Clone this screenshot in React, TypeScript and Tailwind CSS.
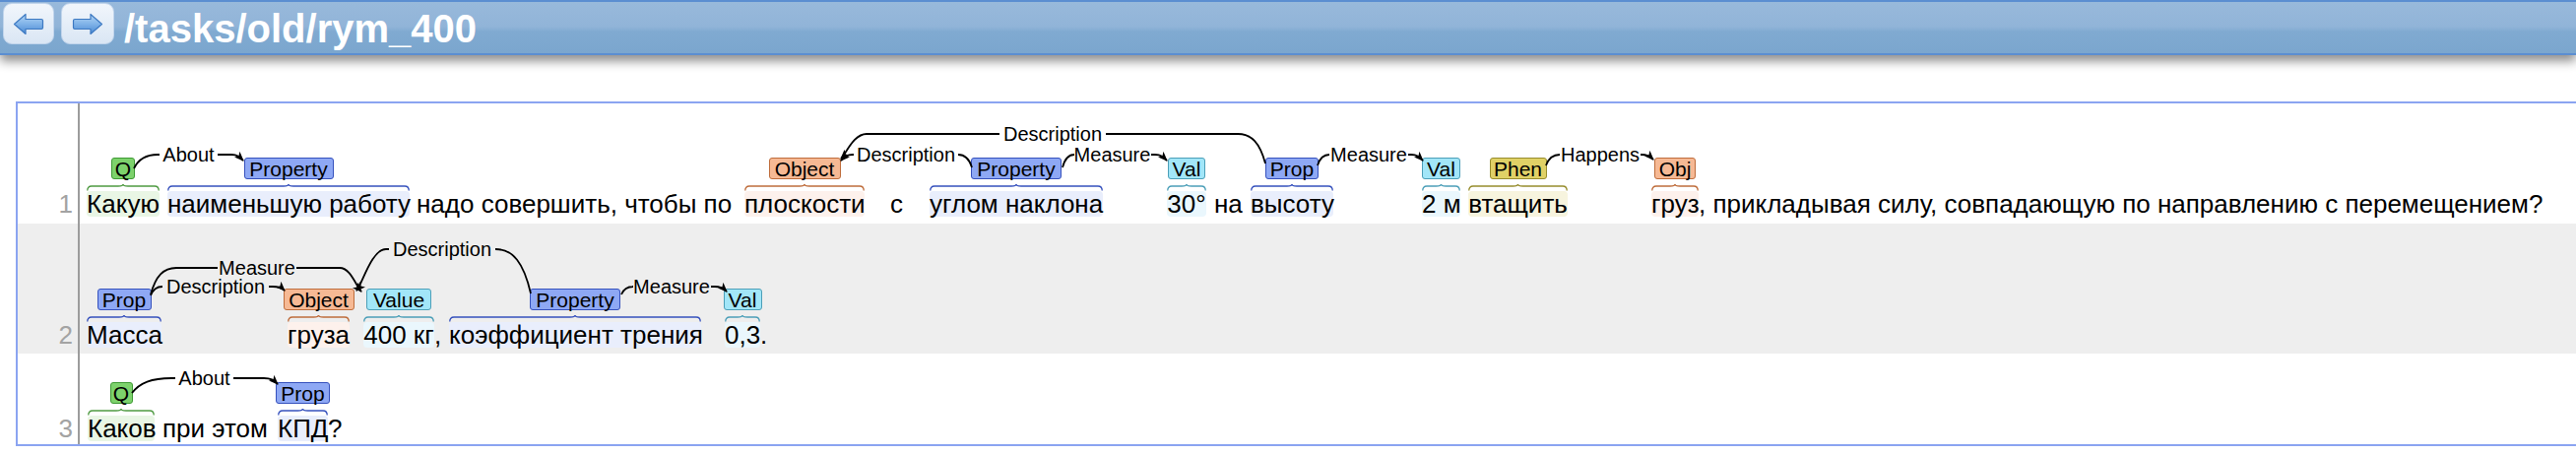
import React from "react";

type T = "Q" | "P" | "O" | "V" | "H";

const STY: Record<T, { box: string; hl: string; br: string }> = {
  Q: { box: "bg-[#7dd26c] border-[#3f9a35]", hl: "bg-[#e9f6e5]", br: "#4f9a42" },
  P: { box: "bg-[#8ea8f4] border-[#3651bd]", hl: "bg-[#e9eefc]", br: "#3651bd" },
  O: { box: "bg-[#f6b994] border-[#bf6d3c]", hl: "bg-[#fdf1ec]", br: "#bf6d3c" },
  V: { box: "bg-[#a2e6f8] border-[#4c9fb8]", hl: "bg-[#eaf7fd]", br: "#4c9fb8" },
  H: { box: "bg-[#e0d166] border-[#978d2e]", hl: "bg-[#f7f4de]", br: "#978d2e" },
};

type Chunk = { t: string; w?: number; wc: string; ml: string; lab?: string; lw?: string; ty?: T };

type ArcD = {
  xa: number; ya: number; xb: number; yb: number; yl: number;
  l0: number; l1: number; label: string; to: "a" | "b"; ka: number; kb: number;
};

const ROW1: Chunk[] = [
  { t: "Какую", w: 74, wc: "w-[74px]", ml: "ml-[7px]", lab: "Q", lw: "w-[24px]", ty: "Q" },
  { t: "наименьшую работу", w: 246, wc: "w-[246px]", ml: "ml-[8px]", lab: "Property", lw: "w-[91px]", ty: "P" },
  { t: "надо совершить, чтобы по", wc: "w-[326px]", ml: "ml-[7px]" },
  { t: "плоскости", w: 122, wc: "w-[122px]", ml: "ml-[7px]", lab: "Object", lw: "w-[73px]", ty: "O" },
  { t: "с", wc: "w-[13px]", ml: "ml-[26px]" },
  { t: "углом наклона", w: 176, wc: "w-[176px]", ml: "ml-[27px]", lab: "Property", lw: "w-[92px]", ty: "P" },
  { t: "30°", w: 40, wc: "w-[40px]", ml: "ml-[65px]", lab: "Val", lw: "w-[38px]", ty: "V" },
  { t: "на", wc: "w-[27px]", ml: "ml-[8px]" },
  { t: "высоту", w: 84, wc: "w-[84px]", ml: "ml-[10px]", lab: "Prop", lw: "w-[54px]", ty: "P" },
  { t: "2 м", w: 39, wc: "w-[39px]", ml: "ml-[90px]", lab: "Val", lw: "w-[39px]", ty: "V" },
  { t: "втащить", w: 101, wc: "w-[101px]", ml: "ml-[8px]", lab: "Phen", lw: "w-[58px]", ty: "H" },
  { t: "груз", w: 48, wc: "w-[48px]", ml: "ml-[85px]", lab: "Obj", lw: "w-[42px]", ty: "O" },
  { t: ", прикладывая силу, совпадающую по направлению с перемещением?", wc: "", ml: "ml-0" },
];

const ROW2: Chunk[] = [
  { t: "Масса", w: 76, wc: "w-[76px]", ml: "ml-[7px]", lab: "Prop", lw: "w-[55px]", ty: "P" },
  { t: "груза", w: 63, wc: "w-[63px]", ml: "ml-[128px]", lab: "Object", lw: "w-[72px]", ty: "O" },
  { t: "400 кг", w: 72, wc: "w-[72px]", ml: "ml-[14px]", lab: "Value", lw: "w-[66px]", ty: "V" },
  { t: ",", wc: "w-[8px]", ml: "ml-0" },
  { t: "коэффициент трения", w: 256, wc: "w-[256px]", ml: "ml-[7px]", lab: "Property", lw: "w-[92px]", ty: "P" },
  { t: "0,3", w: 36, wc: "w-[36px]", ml: "ml-[24px]", lab: "Val", lw: "w-[39px]", ty: "V" },
  { t: ".", wc: "", ml: "ml-0" },
];

const ROW3: Chunk[] = [
  { t: "Каков", w: 68, wc: "w-[68px]", ml: "ml-[8px]", lab: "Q", lw: "w-[23px]", ty: "Q" },
  { t: "при этом", wc: "w-[107px]", ml: "ml-[8px]" },
  { t: "КПД", w: 51, wc: "w-[51px]", ml: "ml-[10px]", lab: "Prop", lw: "w-[55px]", ty: "P" },
  { t: "?", wc: "", ml: "ml-0" },
];

const ARCS1: ArcD[] = [
  { xa: 136, ya: 171, xb: 247, yb: 163, yl: 157, l0: 165, l1: 218, label: "About", to: "b", ka: 24, kb: 12 },
  { xa: 854, ya: 163, xb: 987, yb: 170, yl: 157, l0: 870, l1: 970, label: "Description", to: "a", ka: 12, kb: 14 },
  { xa: 1079, ya: 170, xb: 1185, yb: 163, yl: 157, l0: 1093, l1: 1166, label: "Measure", to: "b", ka: 12, kb: 12 },
  { xa: 854, ya: 161, xb: 1285, yb: 166, yl: 136, l0: 1018, l1: 1120, label: "Description", to: "a", ka: 26, kb: 28 },
  { xa: 1338, ya: 168, xb: 1445, yb: 163, yl: 157, l0: 1353, l1: 1427, label: "Measure", to: "b", ka: 12, kb: 12 },
  { xa: 1570, ya: 168, xb: 1679, yb: 162, yl: 157, l0: 1587, l1: 1663, label: "Happens", to: "b", ka: 14, kb: 12 },
];

const ARCS2: ArcD[] = [
  { xa: 153, ya: 300, xb: 289, yb: 295, yl: 291, l0: 168, l1: 270, label: "Description", to: "b", ka: 12, kb: 12 },
  { xa: 153, ya: 299, xb: 367, yb: 296, yl: 272, l0: 224, l1: 298, label: "Measure", to: "b", ka: 26, kb: 22 },
  { xa: 362, ya: 295, xb: 539, yb: 298, yl: 253, l0: 398, l1: 500, label: "Description", to: "a", ka: 30, kb: 36 },
  { xa: 631, ya: 299, xb: 738, yb: 296, yl: 291, l0: 645, l1: 719, label: "Measure", to: "b", ka: 12, kb: 12 },
];

const ARCS3: ArcD[] = [
  { xa: 134, ya: 399, xb: 282, yb: 390, yl: 384, l0: 181, l1: 234, label: "About", to: "b", ka: 40, kb: 14 },
];

function arcPaths(a: ArcD): { left: string; right: string } {
  const lx = a.xa + a.ka;
  const rx = a.xb - a.kb;
  const l0 = a.l0 - 3;
  const l1 = a.l1 + 3;
  let left: string;
  let right: string;
  if (a.to === "a") {
    const d = a.ya - a.yl;
    const c = Math.min(d, 8) * 0.7;
    left = `M${l0} ${a.yl} L${lx} ${a.yl} C${a.xa + a.ka * 0.5} ${a.yl} ${a.xa + c} ${a.ya - c} ${a.xa} ${a.ya}`;
    const db = a.yb - a.yl;
    right = `M${a.xb} ${a.yb} C${a.xb - a.kb * 0.2} ${a.yb - db * 0.7} ${a.xb - a.kb * 0.5} ${a.yl} ${rx} ${a.yl} L${l1} ${a.yl}`;
  } else {
    const d = a.ya - a.yl;
    left = `M${a.xa} ${a.ya} C${a.xa + a.ka * 0.2} ${a.ya - d * 0.7} ${a.xa + a.ka * 0.5} ${a.yl} ${lx} ${a.yl} L${l0} ${a.yl}`;
    const db = a.yb - a.yl;
    const c = Math.min(db, 8) * 0.7;
    right = `M${l1} ${a.yl} L${rx} ${a.yl} C${a.xb - a.kb * 0.5} ${a.yl} ${a.xb - c} ${a.yb - c} ${a.xb} ${a.yb}`;
  }
  return { left, right };
}

function Arcs({ arcs, top, h, id }: { arcs: ArcD[]; top: number; h: number; id: string }) {
  return (
    <svg
      className="absolute left-0 top-0 overflow-visible pointer-events-none"
      width={2598}
      height={h}
    >
      <defs>
        <marker id={id} markerWidth={10} markerHeight={8} refX={9} refY={4} orient="auto" markerUnits="userSpaceOnUse">
          <path d="M0 0 L10 4 L0 8 L2.5 4 Z" fill="#000" />
        </marker>
      </defs>
      <g transform={`translate(-18 -${top})`}>
        {arcs.map((a, i) => {
          const p = arcPaths(a);
          return (
            <g key={i}>
              <path d={p.left} fill="none" stroke="#000" strokeWidth={1.8} markerEnd={a.to === "a" ? `url(#${id})` : undefined} />
              <path d={p.right} fill="none" stroke="#000" strokeWidth={1.8} markerEnd={a.to === "b" ? `url(#${id})` : undefined} />
              <text
                x={(a.l0 + a.l1) / 2}
                y={a.yl + 7}
                textAnchor="middle"
                fontSize={20}
                fontFamily="'Liberation Sans', Arial, sans-serif"
                fill="#000"
              >
                {a.label}
              </text>
            </g>
          );
        })}
      </g>
    </svg>
  );
}

function Brace({ w, color }: { w: number; color: string }) {
  const c = w / 2;
  const d = `M0.75 6.5 Q0.75 2 5 2 L${c - 5} 2 Q${c} 2 ${c} 0 Q${c} 2 ${c + 5} 2 L${w - 5} 2 Q${w - 0.75} 2 ${w - 0.75} 6.5`;
  return (
    <svg width={w} height={7} className="block shrink-0 overflow-visible mt-[5px]">
      <path d={d} fill="none" stroke={color} strokeWidth={1.3} />
    </svg>
  );
}

function ChunkView({ c }: { c: Chunk }) {
  if (!c.ty) {
    return (
      <div className={`${c.ml} ${c.wc} shrink-0 h-[26px] text-[26px] leading-[26px] whitespace-nowrap text-black`}>
        {c.t}
      </div>
    );
  }
  const s = STY[c.ty];
  return (
    <div className={`${c.ml} ${c.wc} shrink-0 flex flex-col items-center`}>
      <div
        className={`${c.lw} ${s.box} h-[22px] shrink-0 rounded-[3px] border-[1.5px] flex items-center justify-center text-[21px] leading-none text-black`}
      >
        {c.lab}
      </div>
      <Brace w={c.w ?? 40} color={s.br} />
      <div className={`${s.hl} w-full h-[26px] rounded-[4px] text-center text-[26px] leading-[26px] whitespace-nowrap text-black`}>
        {c.t}
      </div>
    </div>
  );
}

function Row({
  n, chunks, arcs, top, hc, pb, bg, h, id,
}: {
  n: number; chunks: Chunk[]; arcs: ArcD[]; top: number; hc: string; pb: string; bg: string; h: number; id: string;
}) {
  return (
    <div className={`relative flex ${hc} ${bg}`}>
      <div className={`w-[63px] shrink-0 border-r-2 border-[#9c9c9c] flex items-end justify-end pr-[5px] ${pb}`}>
        <div className="h-[26px] text-[26px] leading-[26px] text-[#a3a3a3]">{n}</div>
      </div>
      <div className={`flex items-end ${pb}`}>
        {chunks.map((c, i) => (
          <ChunkView key={i} c={c} />
        ))}
      </div>
      <Arcs arcs={arcs} top={top} h={h} id={id} />
    </div>
  );
}

function ArrowIcon({ flip }: { flip?: boolean }) {
  const gid = flip ? "agr" : "agl";
  return (
    <svg width={32} height={23} viewBox="0 0 32 23" className={flip ? "-scale-x-100" : ""}>
      <defs>
        <linearGradient id={gid} x1="0" y1="0" x2="0" y2="1">
          <stop offset="0" stopColor="#b2d5f5" />
          <stop offset="0.5" stopColor="#7fb2e8" />
          <stop offset="1" stopColor="#4a8ad3" />
        </linearGradient>
      </defs>
      <path
        d="M1.5 11.5 L13 1.5 L13 6.5 L29 6.5 Q30.5 6.5 30.5 8 L30.5 15 Q30.5 16.5 29 16.5 L13 16.5 L13 21.5 Z"
        fill={`url(#${gid})`}
        stroke="#3d79c2"
        strokeWidth={1.2}
        strokeLinejoin="round"
      />
    </svg>
  );
}

function Header() {
  return (
    <div className="relative z-10 h-[56px] w-full border-y-2 border-[#5b8ed1] bg-[linear-gradient(to_bottom,#98b9db_0%,#91b4d8_48%,#80aad1_58%,#7ba6ce_100%)] shadow-[0_6px_10px_rgba(0,0,0,0.45)] flex items-start">
      <button className="mt-[1px] ml-[3px] w-[52px] h-[42px] rounded-[9px] border border-[#c2d5ec] bg-[linear-gradient(to_bottom,#f1f6fc,#dae6f4)] flex items-center justify-center">
        <ArrowIcon />
      </button>
      <button className="mt-[1px] ml-[7px] w-[54px] h-[42px] rounded-[9px] border border-[#c2d5ec] bg-[linear-gradient(to_bottom,#f1f6fc,#dae6f4)] flex items-center justify-center">
        <ArrowIcon flip />
      </button>
      <div className="ml-[10px] mt-[7px] text-[40px] leading-[40px] font-bold text-white whitespace-nowrap">
        /tasks/old/rym_400
      </div>
    </div>
  );
}

export default function App() {
  return (
    <div className="w-[2616px] h-[462px] overflow-hidden bg-white font-['Liberation_Sans',Arial,sans-serif]">
      <Header />
      <div className="mt-[47px] ml-[16px] border-l-2 border-y-2 border-[#8ba4f1]">
        <Row n={1} chunks={ROW1} arcs={ARCS1} top={105} hc="h-[122px]" pb="pb-[7px]" bg="bg-white" h={122} id="ah1" />
        <Row n={2} chunks={ROW2} arcs={ARCS2} top={227} hc="h-[132px]" pb="pb-[6px]" bg="bg-[#eeeeee]" h={132} id="ah2" />
        <Row n={3} chunks={ROW3} arcs={ARCS3} top={359} hc="h-[92px]" pb="pb-[3px]" bg="bg-white" h={92} id="ah3" />
      </div>
    </div>
  );
}
